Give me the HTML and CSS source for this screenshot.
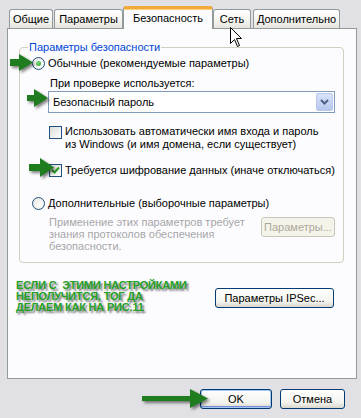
FILE: index.html
```html
<!DOCTYPE html>
<html lang="ru">

<head>
    <meta charset="UTF-8" />
    <meta name="viewport" content="width=device-width, initial-scale=1.0" />
    <title>Свойства: Безопасность</title>
    <link rel="stylesheet" href="styles.css">
</head>

<body>
    <div class="dialog">
        <div class="tabs">
            <div class="tab tab-general">Общие</div>
            <div class="tab tab-params">Параметры</div>
            <div class="tab tab-active">Безопасность</div>
            <div class="tab tab-net">Сеть</div>
            <div class="tab tab-extra">Дополнительно</div>
        </div>

        <div class="panel">
            <fieldset class="group">
                <legend>Параметры безопасности</legend>

                <div class="option">
                    <span class="radio checked"></span>
                    <span>Обычные (рекомендуемые параметры)</span>
                </div>

                <div class="caption">При проверке используется:</div>
                <div class="combo">
                    <span class="combo-text">Безопасный пароль</span>
                    <span class="combo-btn">
                        <svg width="9" height="6" viewBox="0 0 9 6">
                            <polyline points="1,1 4.5,4.5 8,1" fill="none" stroke="#4d6185" stroke-width="2" />
                        </svg>
                    </span>
                </div>

                <div class="check-row">
                    <span class="check"></span>
                    <span>Использовать автоматически имя входа и пароль<br>из Windows (и имя домена, если существует)</span>
                </div>
                <div class="check-row row-encrypt">
                    <span class="check">
                        <svg width="11" height="11" viewBox="0 0 11 11">
                            <polyline points="2,5 4.5,7.5 9,2.5" fill="none" stroke="#21a121" stroke-width="2" />
                        </svg>
                    </span>
                    <span>Требуется шифрование данных (иначе отключаться)</span>
                </div>

                <div class="option option-custom">
                    <span class="radio"></span>
                    <span>Дополнительные (выборочные параметры)</span>
                </div>
                <div class="custom">
                    <p class="hint">Применение этих параметров требует<br>знания протоколов обеспечения<br>безопасности.</p>
                    <button type="button" class="btn btn-custom" disabled>Параметры...</button>
                </div>
            </fieldset>

            <div class="ipsec-row">
                <p class="note">ЕСЛИ С&nbsp; ЭТИМИ НАСТРОЙКАМИ<br>НЕПОЛУЧИТСЯ, ТОГ ДА<br>ДЕЛАЕМ КАК НА РИС.11</p>
                <button type="button" class="btn btn-ipsec">Параметры IPSec...</button>
            </div>
        </div>

        <div class="footer">
            <button type="button" class="btn btn-ok">OK</button>
            <button type="button" class="btn btn-cancel">Отмена</button>
        </div>

        <!-- green hint arrows drawn over the dialog -->
        <svg class="marks" width="361" height="418" viewBox="0 0 361 418">
            <polygon points="10,59 19,59 19,54 33,62.5 19,71 19,66 10,66" />
            <polygon points="27,95 34,95 34,89 48,98 34,107 34,101 27,101" />
            <polygon points="29,164 40,164 40,158 54,167.5 40,177 40,171 29,171" />
            <polygon points="142,396 190,396 190,389 208,398.5 190,408 190,401 142,401" />
        </svg>

        <svg class="cursor" width="13" height="21" viewBox="0 0 13 21">
            <path d="M0.5,0.5 L0.5,16.5 L4.5,12.5 L7.5,19.5 L9.5,18.5 L6.5,11.5 L11.5,11.5 Z" fill="#fff" stroke="#000" stroke-width="1" stroke-linejoin="round" />
        </svg>
    </div>
</body>

</html>
```

FILE: styles.css
```css
body {
    margin: 0;
    background-color: #e1e0e5;
    font-family: "Liberation Sans", Arial, sans-serif;
    font-size: 11px;
    color: #000;
}

.dialog {
    position: relative;
    padding: 6px 0 0 7px;
    height: 412px;
}

/* tabs */

.tabs {
    display: flex;
    align-items: flex-start;
    height: 23px;
    padding-left: 2px;
}

.tab {
    box-sizing: border-box;
    height: 19px;
    margin-top: 3px;
    border: 1px solid #919b9c;
    border-bottom: none;
    border-radius: 3px 3px 0 0;
    background: linear-gradient(#ffffff, #f3f3ef 60%, #e6e4dc);
    text-align: center;
    line-height: 18px;
}

.tab-general {
    width: 44px;
    margin-right: 1px;
}

.tab-params {
    width: 69px;
}

.tab-active {
    width: 90px;
    height: 23px;
    margin-top: 0;
    border-top: 3px solid #f2a93b;
    background: #fcfcfe;
    line-height: 19px;
    box-shadow: inset 0 1px 0 #ffd27a;
}

.tab-net {
    width: 38px;
    margin-right: 2px;
}

.tab-extra {
    width: 87px;
}

/* panel */

.panel {
    box-sizing: border-box;
    width: 350px;
    height: 351px;
    margin-top: -1px;
    padding: 12px 13px 0 11px;
    border: 1px solid #919b9c;
    background-color: #fcfcfe;
}

.group {
    margin: 0;
    padding: 3px 8px 10px 12px;
    border: 1px solid #d0d0bf;
    border-radius: 4px;
}

.group legend {
    margin-left: -4px;
    padding: 0 1px;
    color: #0046d5;
    line-height: 13px;
}

.option {
    display: flex;
    align-items: center;
    gap: 3px;
    height: 13px;
    line-height: 13px;
}

.option-custom {
    margin-top: 20px;
}

.radio {
    box-sizing: border-box;
    width: 13px;
    height: 13px;
    border: 1px solid #1c5180;
    border-radius: 50%;
    background: radial-gradient(circle at 65% 65%, #ffffff, #e4e3dc);
    display: flex;
    align-items: center;
    justify-content: center;
}

.radio.checked::after {
    content: "";
    width: 5px;
    height: 5px;
    border-radius: 50%;
    background: radial-gradient(circle at 35% 35%, #7fdc7f, #1f9a1f);
}

.caption {
    margin: 7px 0 0 18px;
    line-height: 13px;
}

.combo {
    box-sizing: border-box;
    display: flex;
    align-items: center;
    width: 287px;
    height: 22px;
    margin: 1px 0 0 16px;
    border: 1px solid #7f9db9;
    background-color: #fff;
}

.combo-text {
    flex: 1;
    padding-left: 4px;
}

.combo-btn {
    box-sizing: border-box;
    width: 17px;
    height: 18px;
    margin-right: 1px;
    border: 1px solid #b8c8ec;
    border-radius: 2px;
    background: linear-gradient(#d8e2f8, #b6c6ee);
    display: flex;
    align-items: center;
    justify-content: center;
}

.check-row {
    display: flex;
    align-items: flex-start;
    gap: 3px;
    margin: 12px 0 0 17px;
    line-height: 13px;
}

.row-encrypt {
    margin-top: 13px;
}

.check {
    box-sizing: border-box;
    width: 13px;
    height: 13px;
    margin-top: 1px;
    border: 1px solid #1c5180;
    background: linear-gradient(135deg, #dcdcd7, #ffffff);
    display: flex;
    align-items: center;
    justify-content: center;
}

.row-encrypt .check {
    margin-top: 0;
}

.custom {
    display: flex;
    align-items: flex-start;
    margin: 6px 0 0 17px;
}

.hint {
    margin: 0;
    color: #a7a6aa;
    line-height: 12px;
}

/* buttons */

.btn {
    box-sizing: border-box;
    height: 20px;
    padding: 0;
    border: 1px solid #003c74;
    border-radius: 3px;
    background: linear-gradient(#ffffff, #f3f3ee 70%, #d9d5cb);
    font-family: inherit;
    font-size: 11px;
    color: #000;
}

.btn:disabled {
    border-color: #c9c7ba;
    background: #f5f4ea;
    color: #aca899;
}

.btn-custom {
    width: 74px;
    margin: 1px 0 0 auto;
}

.ipsec-row {
    display: flex;
    align-items: flex-start;
    margin-top: 14px;
}

.note {
    margin: 3px 0 0 -3px;
    color: #25a025;
    font-weight: bold;
    font-size: 11px;
    line-height: 11px;
    letter-spacing: -0.2px;
    text-shadow: 2px 2px 2px rgba(0, 0, 0, 0.55);
}

.btn-ipsec {
    width: 119px;
    margin: 11px 9px 0 auto;
}

.footer {
    display: flex;
    justify-content: flex-end;
    gap: 8px;
    margin-top: 10px;
    padding-right: 16px;
}

.btn-ok {
    width: 72px;
    box-shadow: inset 0 0 0 1px #a9c4ee, inset 0 -1px 0 1px #6f8fdc;
}

.btn-cancel {
    width: 65px;
}

/* overlays */

.marks {
    position: absolute;
    top: 0;
    left: 0;
    fill: #1f7d1f;
    filter: drop-shadow(2px 2px 1.5px rgba(0, 0, 0, 0.5));
    pointer-events: none;
}

.cursor {
    position: absolute;
    top: 27px;
    left: 230px;
}
```
